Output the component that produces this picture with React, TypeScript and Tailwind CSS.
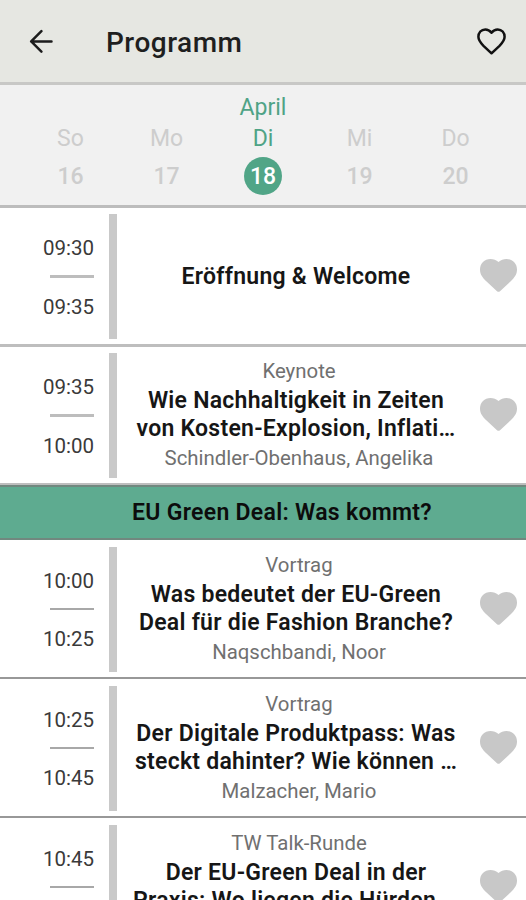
import React from 'react';

interface Day {
  name: string;
  date: number;
  month?: string;
}

interface Session {
  start: string;
  end: string;
  type?: string;
  title: string[];
  speaker?: string;
}

const days: Day[] = [
  { name: 'So', date: 16 },
  { name: 'Mo', date: 17 },
  { name: 'Di', date: 18, month: 'April' },
  { name: 'Mi', date: 19 },
  { name: 'Do', date: 20 },
];

const opening: Session[] = [
  { start: '09:30', end: '09:35', title: ['Eröffnung & Welcome'] },
  {
    start: '09:35',
    end: '10:00',
    type: 'Keynote',
    title: ['Wie Nachhaltigkeit in Zeiten', 'von Kosten-Explosion, Inflati…'],
    speaker: 'Schindler-Obenhaus, Angelika',
  },
];

const greenDeal: Session[] = [
  {
    start: '10:00',
    end: '10:25',
    type: 'Vortrag',
    title: ['Was bedeutet der EU-Green', 'Deal für die Fashion Branche?'],
    speaker: 'Naqschbandi, Noor',
  },
  {
    start: '10:25',
    end: '10:45',
    type: 'Vortrag',
    title: ['Der Digitale Produktpass: Was', 'steckt dahinter? Wie können …'],
    speaker: 'Malzacher, Mario',
  },
  {
    start: '10:45',
    end: '11:15',
    type: 'TW Talk-Runde',
    title: ['Der EU-Green Deal in der', 'Praxis: Wo liegen die Hürden …'],
    speaker: 'Podium',
  },
];

const BackIcon: React.FC = () => (
  <svg viewBox="0 0 24 24" className="w-6 h-6" fill="none" stroke="#1c1c1c" strokeWidth="2.5" strokeLinecap="round" strokeLinejoin="round">
    <path d="M22.5 12.4H2.2M12.4 2.2L2.2 12.4l10.2 10.2" />
  </svg>
);

const HeartOutline: React.FC = () => (
  <svg viewBox="0 0 29 27" className="w-[29px] h-[27px]" fill="none" stroke="#111" strokeWidth="2.5" strokeLinejoin="round">
    <path d="M14.5 4.7C12.6 2.3 10.4 1.4 8.3 1.4C4.2 1.4 1.4 4.6 1.4 8.8C1.4 12.4 3.5 14.8 6.5 17.8L14.5 25.3L22.5 17.8C25.5 14.8 27.6 12.4 27.6 8.8C27.6 4.6 24.8 1.4 20.7 1.4C18.6 1.4 16.4 2.3 14.5 4.7Z" />
  </svg>
);

const HeartFilled: React.FC = () => (
  <svg viewBox="0 0 37 33" className="w-[37px] h-[33px]" fill="#c8c8c8">
    <path d="M18.5 3C20.7 1 23.5 0 26.5 0C32.5 0 37 4.5 37 10.6C37 15.6 34.5 18.6 31 22L20 32.2Q18.5 33.4 17 32.2L6 22C2.5 18.6 0 15.6 0 10.6C0 4.5 4.5 0 10.5 0C13.5 0 16.3 1 18.5 3Z" />
  </svg>
);

const Header: React.FC = () => (
  <header className="h-[85px] shrink-0 flex items-center bg-[#e6e7e2] border-b-3 border-[#c8c8c6] pl-[29px] pr-5">
    <button aria-label="Zurück">
      <BackIcon />
    </button>
    <h1 className="ml-[53px] mt-1 flex-1 text-[28px] leading-8 font-medium tracking-[0.5px] text-[#1f1f1f]">Programm</h1>
    <button aria-label="Favoriten">
      <HeartOutline />
    </button>
  </header>
);

const DayPicker: React.FC = () => (
  <nav className="h-[123px] shrink-0 grid grid-cols-[96px_96px_97px_96px_96px] justify-center bg-[#f1f1f1] border-b-3 border-[#bdbdbd] pt-1.5">
    {days.map((day) => (
      <div
        key={day.date}
        className={`flex flex-col items-center text-[23px] ${day.month ? 'text-[#4fa386]' : 'text-[#cdcdcd]'}`}
      >
        <span className="h-8 leading-[33px]">{day.month}</span>
        <span className="h-8 leading-8">{day.name}</span>
        <span
          className={`mt-[2px] w-[38px] h-[38px] rounded-full text-center leading-[40px] font-medium ${
            day.month ? 'bg-[#51a587] text-white font-bold' : ''
          }`}
        >
          {day.date}
        </span>
      </div>
    ))}
  </nav>
);

interface SessionRowProps {
  session: Session;
  border: string;
  rule: string;
  bar: string;
}

const SessionRow: React.FC<SessionRowProps> = ({ session, border, rule, bar }) => (
  <article className={`h-[139px] shrink-0 flex ${border}`}>
    <div className="w-[94px] pt-[2px] flex flex-col items-end justify-center text-[20.5px] leading-[34px] text-[#3a3a3a]">
      <time>{session.start}</time>
      <div className={`w-11 mt-2.5 mb-3 ${rule}`} />
      <time>{session.end}</time>
    </div>
    <div className={`ml-[15px] w-2 h-[125px] bg-[#c9c9c9] ${bar}`} />
    <div className="w-[358px] pt-px flex flex-col items-center justify-center text-[20.4px] leading-[30px] text-[#707070] whitespace-nowrap">
      {session.type && <p className="-mt-[2px] mb-px ml-1.5">{session.type}</p>}
      <h2 className="text-center text-[23px] leading-7 tracking-[0.26px] font-semibold text-[#161616]">
        {session.title.map((line) => (
          <span key={line} className="block">{line}</span>
        ))}
      </h2>
      {session.speaker && <p className="ml-1.5">{session.speaker}</p>}
    </div>
    <button aria-label="Merken" className="self-center ml-[5px] mb-px">
      <HeartFilled />
    </button>
  </article>
);

export default function App() {
  return (
    <div className="w-[526px] h-[900px] overflow-hidden flex flex-col bg-white font-['Roboto',sans-serif]">
      <Header />
      <DayPicker />
      <main>
        {opening.map((s) => (
          <SessionRow key={s.start} session={s} border="border-b-3 border-[#bebebe]" rule="h-[3px] bg-[#bdbdbd]" bar="mt-1.5" />
        ))}
        <div className="-mt-px h-[55px] flex items-center border-y-2 border-[#71887f] bg-[#5eab90] pl-[132px]">
          <h3 className="pt-px text-[23px] tracking-[0.3px] font-semibold text-[#0c0c0c]">EU Green Deal: Was kommt?</h3>
        </div>
        {greenDeal.map((s) => (
          <SessionRow key={s.start} session={s} border="border-b-2 border-[#989898]" rule="h-[2px] bg-[#a8a8a8]" bar="mt-[7px]" />
        ))}
      </main>
    </div>
  );
}
